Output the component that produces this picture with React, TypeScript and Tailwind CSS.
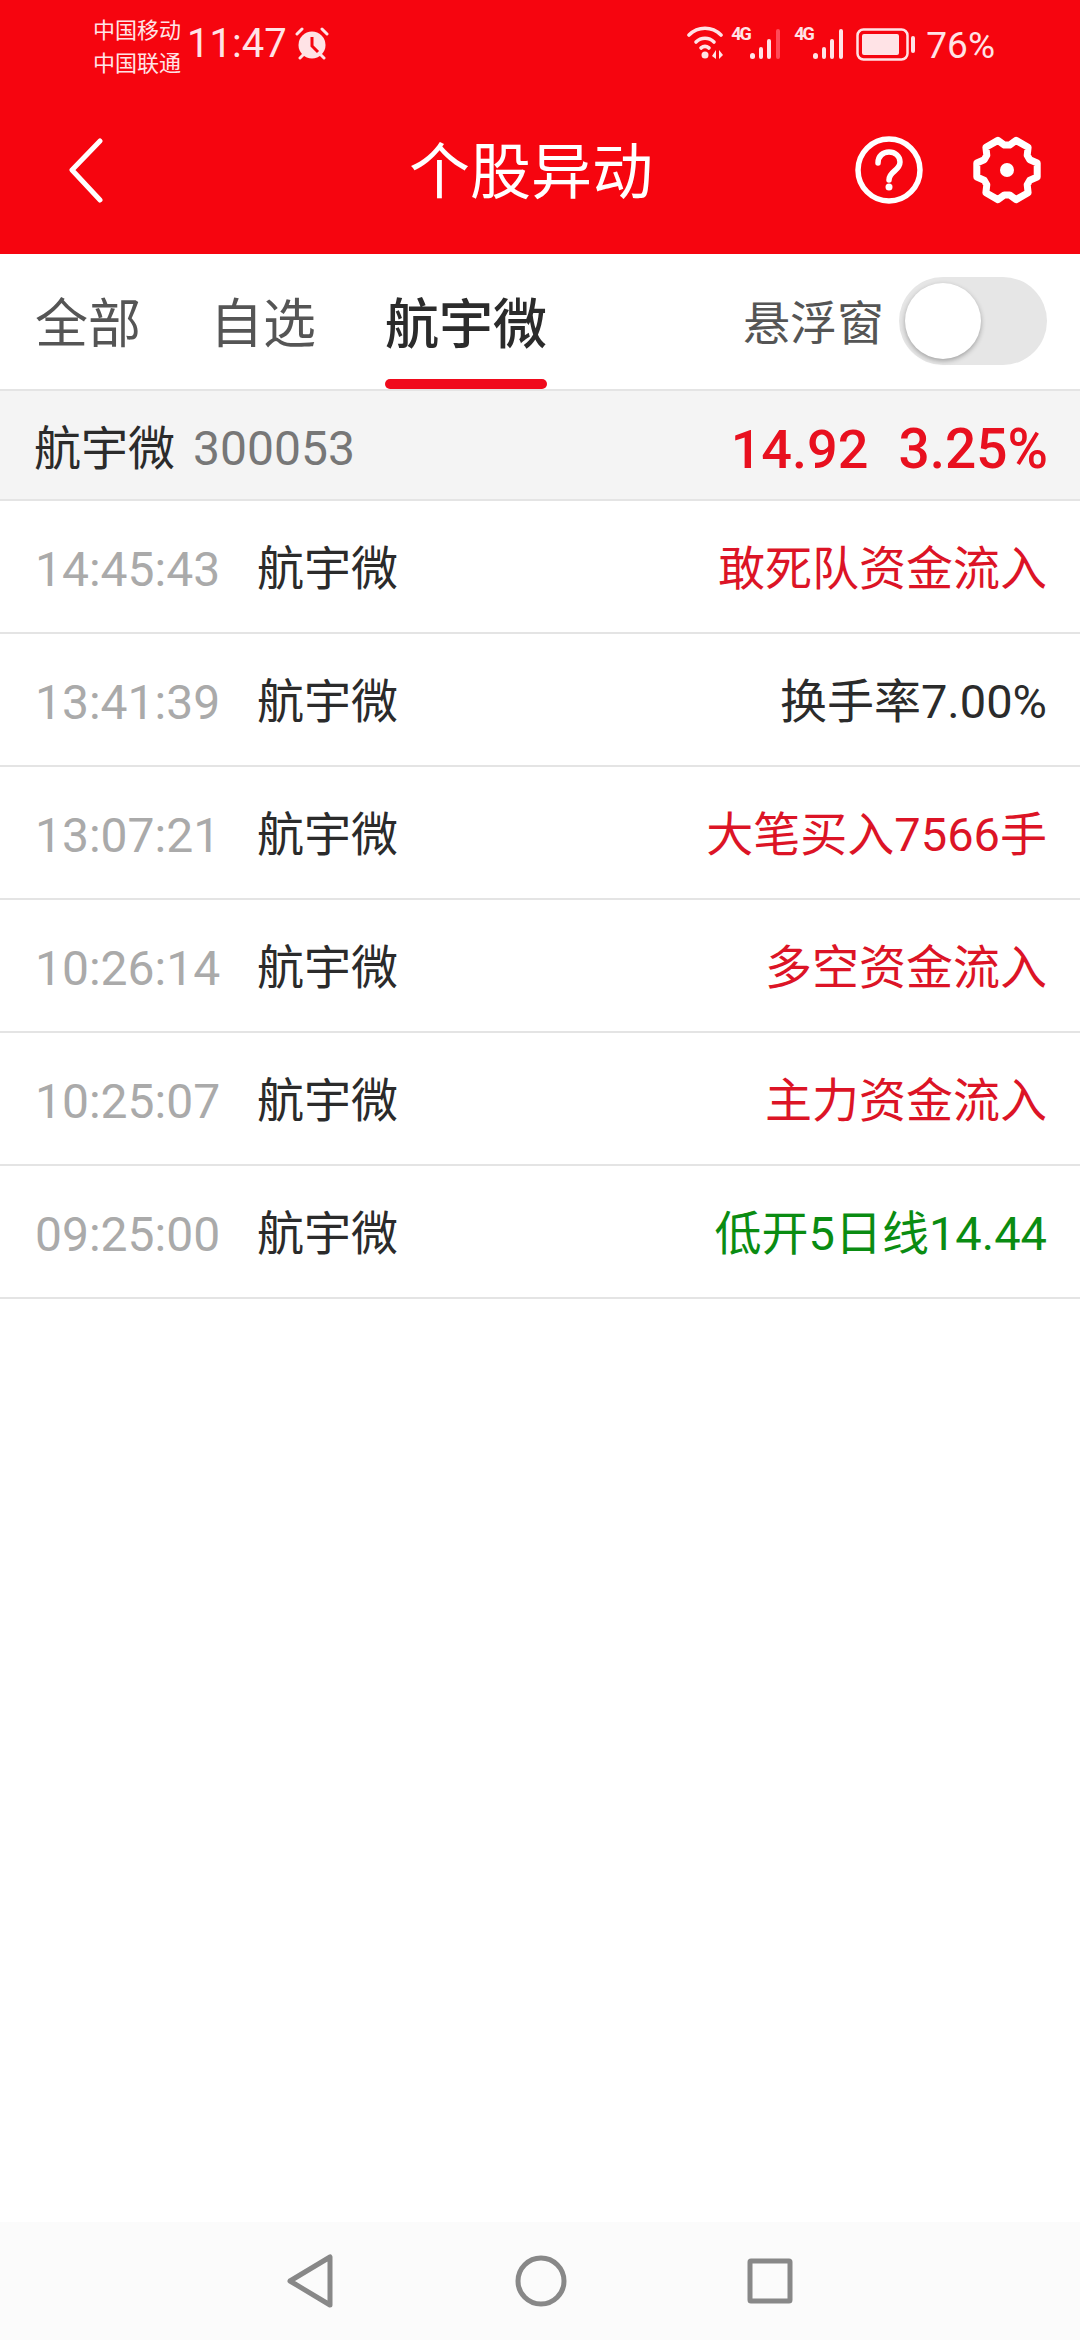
import React from "react";

const CJK = "font-['Roboto','Noto_Sans_CJK_SC',sans-serif]";

interface AlertRow {
  time: string;
  label: string;
  color: string;
}

const rows: AlertRow[] = [
  { time: "14:45:43", label: "敢死队资金流入", color: "text-[#dc1426]" },
  { time: "13:41:39", label: "换手率7.00%", color: "text-[#2b2b2b]" },
  { time: "13:07:21", label: "大笔买入7566手", color: "text-[#dc1426]" },
  { time: "10:26:14", label: "多空资金流入", color: "text-[#dc1426]" },
  { time: "10:25:07", label: "主力资金流入", color: "text-[#dc1426]" },
  { time: "09:25:00", label: "低开5日线14.44", color: "text-[#0a8c12]" },
];

// gear outline: six teeth, one pointing right
const gearPath = (() => {
  const pts: string[] = [];
  for (let i = 0; i < 6; i++) {
    const a = i * 60;
    [
      [a - 24, 25],
      [a - 13, 31],
      [a + 13, 31],
      [a + 24, 25],
    ].forEach(([deg, r]) => {
      const rad = (deg * Math.PI) / 180;
      pts.push(`${(36 + r * Math.cos(rad)).toFixed(1)} ${(36 + r * Math.sin(rad)).toFixed(1)}`);
    });
  }
  return "M" + pts.join("L") + "Z";
})();

const Signal = ({ dim }: { dim?: boolean }) => (
  <svg width="34" height="32" viewBox="0 0 34 32" className="fill-[#ffe3e6]">
    <rect x="1" y="25" width="5" height="6" rx="2.5" />
    <rect x="10" y="19" width="4" height="12" rx="2" />
    <rect x="18" y="11" width="4" height="20" rx="2" />
    <rect x="27" y="1" width="4" height="30" rx="2" className={dim ? "fill-[#ff4a57]" : ""} />
  </svg>
);

const StatusBar = () => (
  <div className="h-[86px] flex items-start pl-[93px] pr-[85px] text-[#ffe3e6]">
    <div className="w-[90px] mt-[14px] text-[22px] leading-[33px] whitespace-nowrap">
      <div>中国移动</div>
      <div>中国联通</div>
    </div>
    <div className="ml-[4px] mt-[22px] text-[40px] leading-[44px]">11:47</div>
    <svg width="36" height="34" viewBox="0 0 36 34" className="ml-[7px] mt-[27px]">
      <circle cx="18" cy="18" r="13.5" fill="#ffe3e6" />
      <path d="M18 10v9l6 6" fill="none" stroke="#f6050f" strokeWidth="3" />
      <path d="M3 7l5-5M33 7l-5-5M6 31l4-4M30 31l-4-4" stroke="#ffe3e6" strokeWidth="3" strokeLinecap="round" />
    </svg>
    <div className="flex-1" />
    <svg width="38" height="34" viewBox="0 0 38 34" className="mt-[26px]">
      <g fill="none" stroke="#ffe3e6" strokeWidth="3.6" strokeLinecap="round">
        <path d="M2 9C11 0 25 0 34 9" />
        <path d="M9 16c5-5 13-5 18 0" />
        <path d="M14 22c2.500-2 5.500-2 8 0" />
      </g>
      <circle cx="18" cy="29" r="3.500" fill="#ffe3e6" />
      <path d="M29 24v9l-4-3zM32 33v-9l4 5z" fill="#ffe3e6" />
    </svg>
    <div className="ml-[6px] mt-[24px] w-[18px] text-[18px] leading-[20px] font-bold tracking-[-2px] whitespace-nowrap">4G</div>
    <div className="mt-[28px]">
      <Signal dim />
    </div>
    <div className="ml-[11px] mt-[24px] w-[18px] text-[18px] leading-[20px] font-bold tracking-[-2px] whitespace-nowrap">4G</div>
    <div className="mt-[28px]">
      <Signal />
    </div>
    <svg width="62" height="34" viewBox="0 0 62 34" className="ml-[10px] mt-[28px]">
      <rect x="1.500" y="1.500" width="50" height="30" rx="6" fill="none" stroke="#ffe3e6" strokeWidth="2.500" />
      <rect x="6" y="6" width="37" height="21" rx="2" fill="#ffe3e6" />
      <rect x="55" y="8" width="4" height="17" rx="2" fill="#ffe3e6" />
    </svg>
    <div className="ml-[8px] mt-[24px] text-[37px] leading-[44px]">76%</div>
  </div>
);

const TitleBar = () => (
  <div className="h-[168px] flex items-center pl-[67px] pr-[38px] text-white">
    <svg width="40" height="66" viewBox="0 0 40 66" fill="none" stroke="currentColor" strokeWidth="5" strokeLinecap="round" strokeLinejoin="round" className="mt-[2px]">
      <path d="M33 3L5 32l28 30" />
    </svg>
    <div className="ml-[302px] mt-[6px] text-[61px] leading-[70px] whitespace-nowrap">个股异动</div>
    <div className="flex-1" />
    <svg width="68" height="70" viewBox="0 0 68 70" fill="none" stroke="currentColor" strokeWidth="5.500">
      <circle cx="34" cy="35" r="31" />
      <path d="M23 28c0-7 5-11 11-11s11 4 11 10c0 9-11 9-11 18" strokeLinecap="round" />
      <circle cx="34" cy="52" r="3.500" fill="currentColor" stroke="none" />
    </svg>
    <svg width="72" height="72" viewBox="0 0 72 72" fill="none" stroke="currentColor" strokeWidth="7" strokeLinejoin="round" className="ml-[48px] mr-[-1px]">
      <path d={gearPath} />
      <circle cx="36" cy="36" r="7" fill="currentColor" stroke="none" />
    </svg>
  </div>
);

const Tabs = () => (
  <div className="h-[137px] flex items-stretch pl-[35px] pr-[33px] border-b-2 border-[#e4e4e4]">
    <div className="flex items-center pt-[8px] text-[53px] text-[#555] w-[175px]">全部</div>
    <div className="flex items-center pt-[8px] text-[53px] text-[#555] w-[175px]">自选</div>
    <div className="relative flex items-center pt-[8px] text-[54px] font-medium text-[#2b2b2b]">
      航宇微
      <div className="absolute left-0 right-0 bottom-0 h-[10px] rounded-full bg-[#f00a1c]" />
    </div>
    <div className="flex-1" />
    <div className="flex items-center pt-[6px] text-[47px] text-[#555]">悬浮窗</div>
    <div className="ml-[15px] mt-[23px] w-[148px] h-[88px] rounded-full bg-[#e6e6e6] p-[6px]">
      <div className="w-[76px] h-[76px] rounded-full bg-white shadow-[0_2px_5px_rgba(0,0,0,0.3)]" />
    </div>
  </div>
);

const StockSummary = () => (
  <div className="h-[110px] flex items-center pt-[8px] pl-[34px] pr-[32px] bg-[#f4f4f4] border-b-2 border-[#e4e4e4]">
    <span className="text-[47px] text-[#2b2b2b]">航宇微</span>
    <span className="ml-[18px] text-[48px] text-[#777]">300053</span>
    <span className="flex-1" />
    <span className="text-[54px] font-medium text-[#e8101f]">14.92</span>
    <span className="ml-[30px] text-[55px] font-medium text-[#e8101f]">3.25%</span>
  </div>
);

export default function App() {
  return (
    <div className={`w-[1080px] h-[2340px] flex flex-col bg-white ${CJK}`}>
      <div className="bg-[#f6050f]">
        <StatusBar />
        <TitleBar />
      </div>
      <Tabs />
      <StockSummary />
      <div>
        {rows.map((row) => (
          <div key={row.time} className="h-[133px] flex items-center pt-[6px] pl-[35px] pr-[33px] border-b-2 border-[#e4e4e4]">
            <span className="w-[222px] text-[48px] text-[#aaaaaa]">{row.time}</span>
            <span className="text-[47px] text-[#2b2b2b]">航宇微</span>
            <span className="flex-1" />
            <span className={`text-[47px] ${row.color}`}>{row.label}</span>
          </div>
        ))}
      </div>
      <div className="flex-1" />
      <div className="h-[118px] flex items-center bg-[#fbfbfb] pl-[287px]">
        <svg width="46" height="54" viewBox="0 0 46 54" fill="none" stroke="#888" strokeWidth="5" strokeLinejoin="round">
          <path d="M43 3v48L3 27z" />
        </svg>
        <svg width="52" height="52" viewBox="0 0 52 52" fill="none" stroke="#888" strokeWidth="5" className="ml-[182px]">
          <circle cx="26" cy="26" r="23" />
        </svg>
        <svg width="46" height="46" viewBox="0 0 46 46" fill="none" stroke="#888" strokeWidth="5" strokeLinejoin="round" className="ml-[180px]">
          <rect x="3" y="3" width="40" height="40" rx="1" />
        </svg>
      </div>
    </div>
  );
}
